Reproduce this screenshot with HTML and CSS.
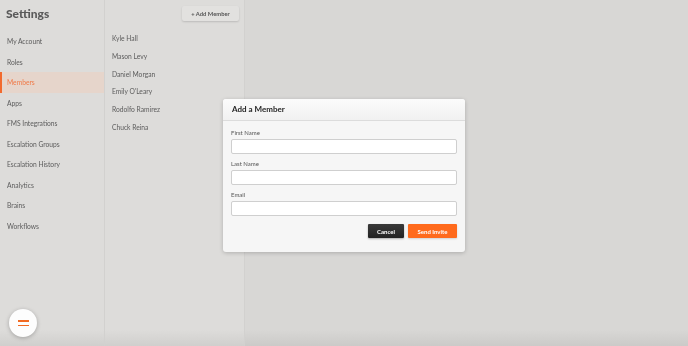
FILE: index.html
```html
<!DOCTYPE html>
<html lang="en">
<head>
  <meta charset="UTF-8">
  <title>Settings - Members</title>
  <link rel="stylesheet" href="styles.css">
</head>
<body>
  <div class="app">
    <aside class="sidebar">
      <h1 class="title">Settings</h1>
      <nav class="menu">
        <a href="#">My Account</a>
        <a href="#">Roles</a>
        <a href="#" class="active">Members</a>
        <a href="#">Apps</a>
        <a href="#">FMS Integrations</a>
        <a href="#">Escalation Groups</a>
        <a href="#">Escalation History</a>
        <a href="#">Analytics</a>
        <a href="#">Brains</a>
        <a href="#">Workflows</a>
      </nav>
      <button class="fab" aria-label="Menu">
        <span></span>
        <span></span>
      </button>
    </aside>
    <section class="members">
      <div class="members-top">
        <button class="add-btn">+ Add Member</button>
      </div>
      <ul class="member-list">
        <li>Kyle Hall</li>
        <li>Mason Levy</li>
        <li>Daniel Morgan</li>
        <li>Emily O'Leary</li>
        <li>Rodolfo Ramirez</li>
        <li>Chuck Reina</li>
      </ul>
    </section>
    <main class="content"></main>
  </div>

  <div class="overlay">
    <div class="modal">
      <div class="modal-header">Add a Member</div>
      <form class="modal-body">
        <label>First Name</label>
        <input type="text">
        <label>Last Name</label>
        <input type="text">
        <label>Email</label>
        <input type="email">
        <div class="actions">
          <button type="button" class="btn btn-dark">Cancel</button>
          <button type="button" class="btn btn-orange">Send Invite</button>
        </div>
      </form>
    </div>
  </div>
</body>
</html>
```

FILE: styles.css
```css
body {
  margin: 0;
  height: 346px;
  overflow: hidden;
  font-family: Lato, "Liberation Sans", sans-serif;
  background: #d8d7d5;
}
.app {
  display: flex;
  height: 346px;
  filter: blur(0.5px);
  background: linear-gradient(to bottom, #d8d7d5 0, #d8d7d5 330px, #cbcac8 346px);
}
.sidebar {
  width: 104px;
  border-right: 1px solid #d2d1cf;
  background: linear-gradient(to bottom, #dddcda 0, #dddcda 330px, #d0cfcd 346px);
  position: relative;
}
.title {
  margin: 0;
  height: 31px;
  padding-left: 6px;
  line-height: 27px;
  font-size: 12px;
  font-weight: 900;
  color: #5a5a5a;
}
.menu {
  display: flex;
  flex-direction: column;
}
.menu a {
  height: 20.5px;
  line-height: 20.5px;
  padding-left: 7px;
  font-size: 6.7px;
  color: #5c5c5c;
  text-decoration: none;
}
.menu a.active {
  background: #e6d5cb;
  color: #f07a48;
  box-shadow: inset 2px 0 0 #f26a2e;
}
.fab {
  position: absolute;
  left: 9px;
  top: 309px;
  width: 28px;
  height: 28px;
  border: none;
  border-radius: 50%;
  background: #fdfdfd;
  box-shadow: 0 1px 4px rgba(0, 0, 0, 0.25);
  display: flex;
  flex-direction: column;
  align-items: center;
  justify-content: center;
  gap: 3px;
  padding: 0;
}
.fab span {
  width: 11px;
  height: 1.6px;
  background: #f26a22;
}
.members {
  width: 139px;
  border-right: 1px solid #d2d1cf;
  background: linear-gradient(to bottom, #dddcda 0, #dddcda 330px, #d0cfcd 346px);
}
.members-top {
  display: flex;
  justify-content: flex-end;
  padding: 6px 5px 0 0;
  height: 24px;
  box-sizing: border-box;
}
.add-btn {
  width: 57px;
  height: 15px;
  border: none;
  border-radius: 2px;
  background: #e2e1df;
  box-shadow: 0 1px 2px rgba(0, 0, 0, 0.15);
  font-family: inherit;
  font-size: 5.8px;
  font-weight: 700;
  color: #555;
  padding: 0;
}
.member-list {
  list-style: none;
  margin: 6px 0 0;
  padding: 0 0 0 7px;
}
.member-list li {
  height: 17.8px;
  line-height: 17.8px;
  font-size: 6.7px;
  color: #5c5c5c;
}
.content {
  flex: 1;
}
.overlay {
  position: fixed;
  inset: 0;
  display: flex;
  justify-content: center;
  align-items: flex-start;
  padding-top: 99px;
}
.modal {
  width: 242px;
  background: #f6f6f6;
  border-radius: 3px;
  box-shadow: 0 1px 4px rgba(0, 0, 0, 0.2);
  overflow: hidden;
}
.modal-header {
  height: 21px;
  line-height: 21px;
  padding-left: 9px;
  font-size: 8px;
  font-weight: 700;
  color: #1f1f1f;
  background: linear-gradient(#fbfbfb, #f1f1f1);
  border-bottom: 1px solid #dcdcdc;
}
.modal-body {
  display: flex;
  flex-direction: column;
  padding: 8px 8px 14px;
}
.modal-body label {
  height: 8px;
  line-height: 8px;
  font-size: 6px;
  color: #555;
  margin-bottom: 2px;
}
.modal-body input {
  height: 15px;
  box-sizing: border-box;
  border: 1px solid #cfcfcf;
  border-radius: 2px;
  background: #fff;
  margin: 0 0 6px;
}
.actions {
  display: flex;
  justify-content: flex-end;
  gap: 4px;
  margin-top: 2px;
}
.btn {
  height: 14px;
  border: none;
  border-radius: 1px;
  font-family: inherit;
  font-size: 6px;
  font-weight: 700;
  color: #fff;
  padding: 0;
}
.btn-dark {
  width: 36px;
  background: linear-gradient(#3a3a3a, #222);
  box-shadow: 0 1px 2px rgba(0, 0, 0, 0.3);
}
.btn-orange {
  width: 49px;
  background: #ff6a1c;
  box-shadow: 0 1px 2px rgba(0, 0, 0, 0.15);
}
```
